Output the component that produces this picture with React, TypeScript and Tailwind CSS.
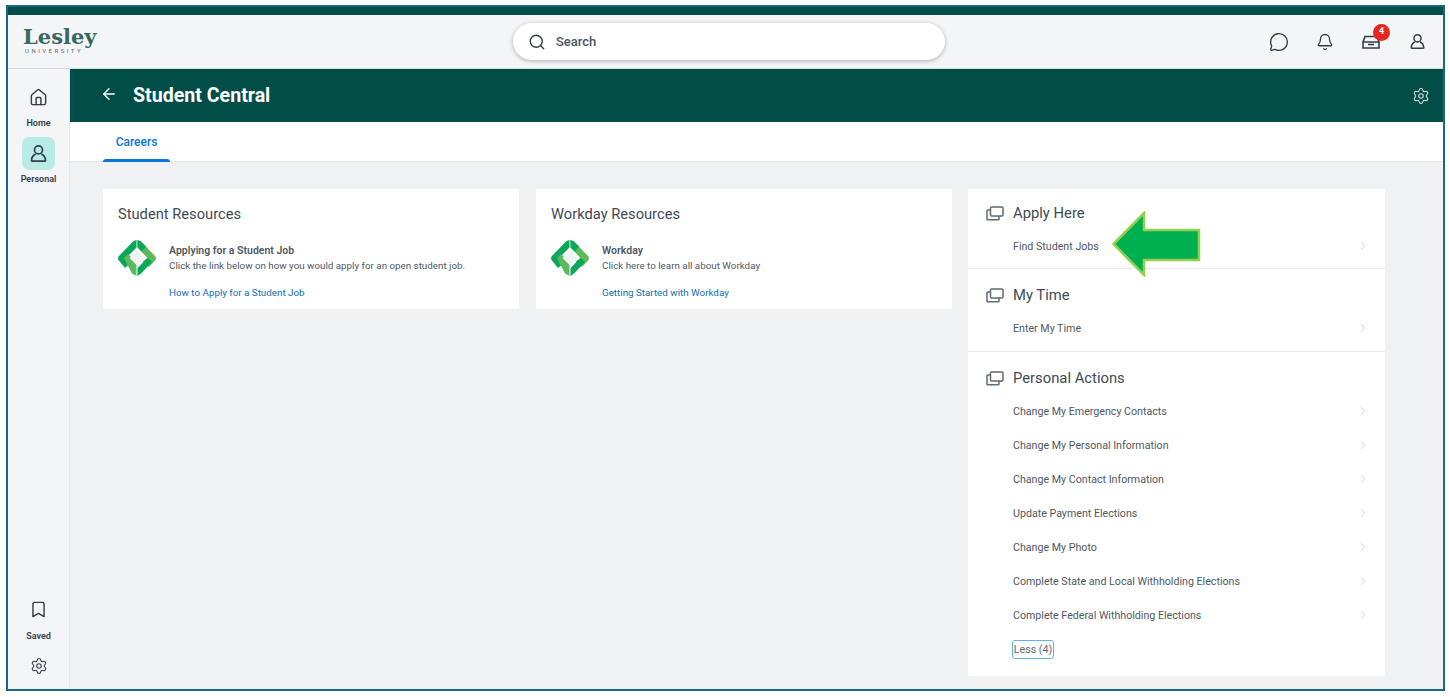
import { ArrowLeft, Bookmark, ChevronRight, Home, Search, Settings, Bell, MessageCircle } from "lucide-react";

const ROBOTO = "font-['Roboto','Liberation_Sans',sans-serif]";

function StackIcon() {
  return (
    <svg width="18" height="15" viewBox="0 0 18 15" fill="none" stroke="#5e6a75" strokeWidth="1.5" className="shrink-0">
      <rect x="4.5" y="1" width="12.5" height="9" rx="1" />
      <path d="M4.5 4H1.8a.8.8 0 0 0-.8.8V13a.8.8 0 0 0 .8.8h10.4a.8.8 0 0 0 .8-.8v-3" />
    </svg>
  );
}

function PersonIcon({ size }: { size: number }) {
  return (
    <svg width={size} height={size} viewBox="0 0 18 18" fill="none" stroke="#333d47" strokeWidth="1.6" strokeLinejoin="round" className="shrink-0">
      <circle cx="9" cy="5.6" r="3.8" />
      <path d="M6.4 9.6 C3.8 10.4 2.6 12.2 2.4 15.6 a.5.5 0 0 0 .5.6 H15.1 a.5.5 0 0 0 .5-.6 C15.4 12.2 14.2 10.4 11.6 9.6" />
    </svg>
  );
}

function ResourceLogo() {
  return (
    <svg width="38" height="36" viewBox="0 0 38 36" className="shrink-0">
      <path d="M18.5 0 V7.5 L8 18 L13 23 L7 28 L0.5 20 Q-0.3 18 0.5 16.5 L15 1.5 Q17 0 18.5 0 Z" fill="#0aa65a" />
      <path d="M19.5 0 L23 1.5 L37.5 16.5 Q38.3 18 37.5 20 L31 27 L24.5 21.5 L29.5 18 L19.5 7.5 Z" fill="#5cba5c" />
      <path d="M19.5 0 L23 1.5 L28 6.5 L24 11.5 L19.5 7.5 Z" fill="#0aa65a" />
      <path d="M6 18 L10 14 L18.5 22 V36 L14 33.5 Z" fill="#5cba5c" />
      <path d="M19.5 36 V28 L29.5 18 L34 22 L23 33.5 Z" fill="#0aa65a" />
      <path d="M19 10.5 L26.5 18 L19 25.5 L11.5 18 Z" fill="#eef3f4" />
    </svg>
  );
}

function ResourceCard({ title, name, desc, link }: { title: string; name: string; desc: string; link: string }) {
  return (
    <section className="w-[416px] h-[120px] bg-white rounded-[2px] pl-[15px] pt-[16px] shrink-0">
      <h2 className="text-[14.7px] leading-[18px] text-[#3f4a54]">{title}</h2>
      <div className="flex gap-[13px] mt-[17px]">
        <ResourceLogo />
        <div className="text-[9.8px] leading-[15px] mt-[4px] text-[#4f5963]">
          <div className="font-semibold text-[10.5px] leading-[14px]">{name}</div>
          <div>{desc}</div>
          <a className="block mt-[12px] text-[#0e6fb5]">{link}</a>
        </div>
      </div>
    </section>
  );
}

function NavItem({ label, icon, active, labelClass }: { label: string; icon: React.ReactNode; active?: boolean; labelClass: string }) {
  return (
    <div className="flex flex-col items-center">
      <div className={`w-[33px] h-[33px] rounded-[7px] flex items-center justify-center ${active ? "bg-[#b8ebe5]" : ""}`}>{icon}</div>
      <span className={`text-[9px] leading-[12px] font-semibold text-[#333d47] ${labelClass}`}>{label}</span>
    </div>
  );
}

function ActionSection({ title, rows, className, children }: { title: string; rows: string[]; className: string; children?: React.ReactNode }) {
  return (
    <div className={`px-[18px] ${className}`}>
      <div className="flex items-center gap-[9px] h-[16px]">
        <StackIcon />
        <h2 className="text-[14.8px] leading-[16px] text-[#3f4a54]">{title}</h2>
      </div>
      <ul className="mt-[9px] pl-[27px]">
        {rows.map((row) => (
          <li key={row} className="flex items-center justify-between h-[34px] text-[10.67px] text-[#4f5963]">
            {row}
            <ChevronRight size={14} strokeWidth={1} className="text-[#aab2b9] -mt-[3px] -mr-[3px]" />
          </li>
        ))}
      </ul>
      {children}
    </div>
  );
}

export default function App() {
  return (
    <div className={`relative w-[1450px] h-[697px] overflow-hidden bg-white pl-[6px] pt-[5px] ${ROBOTO}`}>
      <div className="w-[1439px] h-[686px] border-2 border-[#1b6587] flex flex-col bg-[#f0f1f3]">
        <div className="h-[8px] bg-[#014d47] shrink-0" />

        {/* Barra superior */}
        <header className="h-[54px] bg-[#f4f5f7] shrink-0 relative flex items-center justify-between pl-[15px] pr-[16px] border-b border-[#d6dde0]">
          <div className="flex flex-col -mt-[2px]">
            <span className="font-['DejaVu_Serif',serif] font-bold text-[21px] leading-[20px] text-[#37675f]">Lesley</span>
            <span className="text-[6px] leading-[7px] tracking-[2.5px] text-[#4d6f6a] pl-[2px]">UNIVERSITY</span>
          </div>

          <div className="absolute left-[505px] top-[8px] w-[432px] h-[37px] bg-white rounded-full shadow-[0_1px_4px_rgba(30,40,50,0.35)] flex items-center pl-[15px] gap-[10px]">
            <Search size={18} strokeWidth={1.8} className="text-[#333d47]" />
            <span className="text-[13px] leading-[20px] mt-[1px] font-medium text-[#4a545e]">Search</span>
          </div>

          <div className="flex items-center gap-[26px] text-[#333d47]">
            <MessageCircle size={20} strokeWidth={1.6} />
            <div className="w-[20px] flex justify-center">
              <Bell size={18} strokeWidth={1.7} />
            </div>
            <div className="relative">
              <svg width="20" height="20" viewBox="0 0 20 20" fill="none" stroke="#333d47" strokeWidth="1.6">
                <path d="M2 10 L4 4.5 H16 L18 10 M2 10 H18 V16 H2 Z" />
                <path d="M7 12.5 H13" />
              </svg>
              <span className="absolute -top-[8px] left-[12px] w-[17px] h-[17px] rounded-full bg-[#e5271f] text-white text-[9px] font-bold flex items-center justify-center">4</span>
            </div>
            <div className="w-[20px] flex justify-center">
              <PersonIcon size={17} />
            </div>
          </div>
        </header>

        <div className="flex flex-1 min-h-0">
          {/* Menú lateral */}
          <aside className="w-[62px] shrink-0 bg-[#f4f5f7] border-r border-[#e6e8ea] flex flex-col items-center justify-between pt-[12px] pb-[10px]">
            <div className="flex flex-col items-center gap-[8px]">
              <NavItem label="Home" labelClass="mt-[3px]" icon={<Home size={19} strokeWidth={1.8} className="text-[#333d47]" />} />
              <NavItem label="Personal" labelClass="mt-[3px]" active icon={<PersonIcon size={19} />} />
            </div>
            <div className="flex flex-col items-center gap-[13px]">
              <NavItem label="Saved" labelClass="mt-[4px]" icon={<Bookmark size={19} strokeWidth={1.8} className="text-[#333d47]" />} />
              <Settings size={18} strokeWidth={1.4} className="text-[#333d47] mt-[2px] mb-[4px]" />
            </div>
          </aside>

          <main className="flex-1 min-w-0 flex flex-col">
            <div className="h-[53px] shrink-0 bg-[#014d47] flex items-center pl-[30px] pr-[13px] text-white">
              <ArrowLeft size={18} strokeWidth={1.8} className="-mt-[3px]" />
              <h1 className="ml-[15px] text-[19.6px] font-bold">Student Central</h1>
              <Settings size={18} strokeWidth={1.4} className="ml-auto text-[#d5e5e2]" />
            </div>

            <nav className="h-[40px] shrink-0 bg-white border-b border-[#e3e5e8] pl-[33px] flex">
              <div className="w-[67px] h-[40px] flex flex-col">
                <div className="flex-1 flex items-center justify-center pt-[2px] text-[12px] font-medium text-[#0875e1]">Careers</div>
                <div className="h-[3px] bg-[#0875e1] rounded-t-[3px]" />
              </div>
            </nav>

            <div className="flex items-start gap-[17px] pl-[33px] pt-[27px]">
              <ResourceCard title="Student Resources" name="Applying for a Student Job" desc="Click the link below on how you would apply for an open student job." link="How to Apply for a Student Job" />
              <ResourceCard title="Workday Resources" name="Workday" desc="Click here to learn all about Workday" link="Getting Started with Workday" />

              <section className="w-[417px] h-[487px] bg-white rounded-[2px] -ml-[1px] shrink-0">
                <ActionSection title="Apply Here" rows={["Find Student Jobs"]} className="h-[80px] pt-[16px] border-b border-[#e8eaec]" />
                <ActionSection title="My Time" rows={["Enter My Time"]} className="h-[83px] pt-[18px] border-b border-[#e8eaec]" />
                <ActionSection
                  title="Personal Actions"
                  className="pt-[18px]"
                  rows={[
                    "Change My Emergency Contacts",
                    "Change My Personal Information",
                    "Change My Contact Information",
                    "Update Payment Elections",
                    "Change My Photo",
                    "Complete State and Local Withholding Elections",
                    "Complete Federal Withholding Elections",
                  ]}
                >
                  <button className="ml-[26px] mt-[7px] h-[19px] w-[42px] border border-[#5bb6ee] rounded-[3px] text-[10.67px] leading-[17px] text-[#5e6a75]">
                    Less (4)
                  </button>
                </ActionSection>
              </section>
            </div>
          </main>
        </div>
      </div>

      {/* Flecha de anotación */}
      <svg width="90" height="66" viewBox="0 0 90 66" className="absolute left-[1112px] top-[211px]">
        <path d="M1.5 33 L32 2 V19 H87 V49 H32 V64 Z" fill="#00b050" stroke="#92d050" strokeWidth="2.5" />
      </svg>
    </div>
  );
}
